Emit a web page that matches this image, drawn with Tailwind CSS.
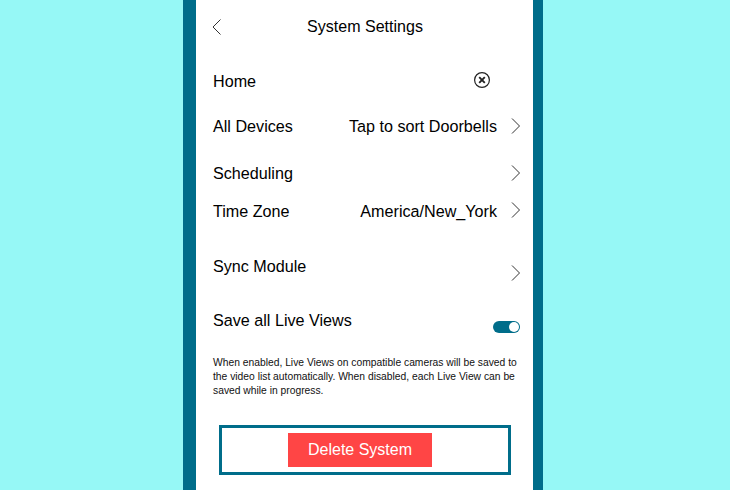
<!DOCTYPE html>
<html lang="en">
<head>
    <meta charset="UTF-8">
    <title>System Settings</title>
    <script src="https://cdn.jsdelivr.net/npm/@tailwindcss/browser@4"></script>
</head>
<body class="bg-[#96f8f6] h-[490px] overflow-hidden font-['Liberation_Sans',Arial,sans-serif] text-black">
    <div class="w-[360px] h-[490px] ml-[183px] bg-white border-l-[13px] border-r-[10px] border-[#006d8a] overflow-hidden">
        <!-- Header -->
        <div class="flex items-center h-[54px] pl-[16px] pr-[12px]">
            <svg width="10" height="16" viewBox="0 0 10 16" fill="none" stroke="#333" stroke-width="1">
                <path d="M8.5 0.5 L1 8 L8.5 15.5"/>
            </svg>
            <span class="flex-1 text-center text-[16.05px] pr-[3px] pb-[2px]">System Settings</span>
            <span class="w-[10px]"></span>
        </div>

        <!-- Rows -->
        <div class="mt-[15px] pl-[17px] pr-[12px] text-[16.15px]">
            <div class="flex items-center h-[24px]">
                <span class="flex-1">Home</span>
                <svg class="mr-[31px] mb-[2px]" width="16" height="16" viewBox="0 0 16 16" fill="none" stroke="#222">
                    <circle cx="8" cy="8" r="7.4" stroke-width="1.2"/>
                    <path d="M5.2 5.2 L10.8 10.8 M10.8 5.2 L5.2 10.8" stroke-width="1.9"/>
                </svg>
            </div>
            <div class="flex items-center h-[24px] mt-[21px]">
                <span class="flex-1">All Devices</span>
                <span class="mr-[14px]">Tap to sort Doorbells</span>
                <svg width="10" height="16" viewBox="0 0 10 16" fill="none" stroke="#333" stroke-width="1">
                    <path d="M1 0.5 L8.5 8 L1 15.5"/>
                </svg>
            </div>
            <div class="flex items-center h-[24px] mt-[23px]">
                <span class="flex-1">Scheduling</span>
                <svg width="10" height="16" viewBox="0 0 10 16" fill="none" stroke="#333" stroke-width="1">
                    <path d="M1 0.5 L8.5 8 L1 15.5"/>
                </svg>
            </div>
            <div class="flex items-center h-[24px] mt-[14px]">
                <span class="flex-1">Time Zone</span>
                <span class="mr-[14px]">America/New_York</span>
                <svg class="mb-[2px]" width="10" height="16" viewBox="0 0 10 16" fill="none" stroke="#333" stroke-width="1">
                    <path d="M1 0.5 L8.5 8 L1 15.5"/>
                </svg>
            </div>
            <div class="flex items-center h-[24px] mt-[31px]">
                <span class="flex-1">Sync Module</span>
                <svg class="mt-[14px]" width="10" height="16" viewBox="0 0 10 16" fill="none" stroke="#333" stroke-width="1">
                    <path d="M1 0.5 L8.5 8 L1 15.5"/>
                </svg>
            </div>
            <div class="flex items-center h-[24px] mt-[30px]">
                <span class="flex-1">Save all Live Views</span>
                <span class="flex items-center justify-end w-[27px] h-[12px] mt-[14px] mr-[1px] rounded-full bg-[#006d8a] pr-[1px]">
                    <span class="w-[10px] h-[10px] rounded-full bg-white"></span>
                </span>
            </div>
        </div>

        <!-- Caption -->
        <p class="mt-[24px] pl-[17px] pr-[12px] text-[10.3px] leading-[14px] text-[#111]">
            When enabled, Live Views on compatible cameras will be saved to the video list automatically. When disabled, each Live View can be saved while in progress.
        </p>

        <!-- Delete -->
        <div class="flex items-center w-[292px] h-[50px] mt-[27px] ml-[23px] border-[3px] border-[#006d8a] pl-[66px]">
            <button class="w-[144px] h-[34px] bg-[#ff4545] text-white text-base">Delete System</button>
        </div>
    </div>
</body>
</html>
